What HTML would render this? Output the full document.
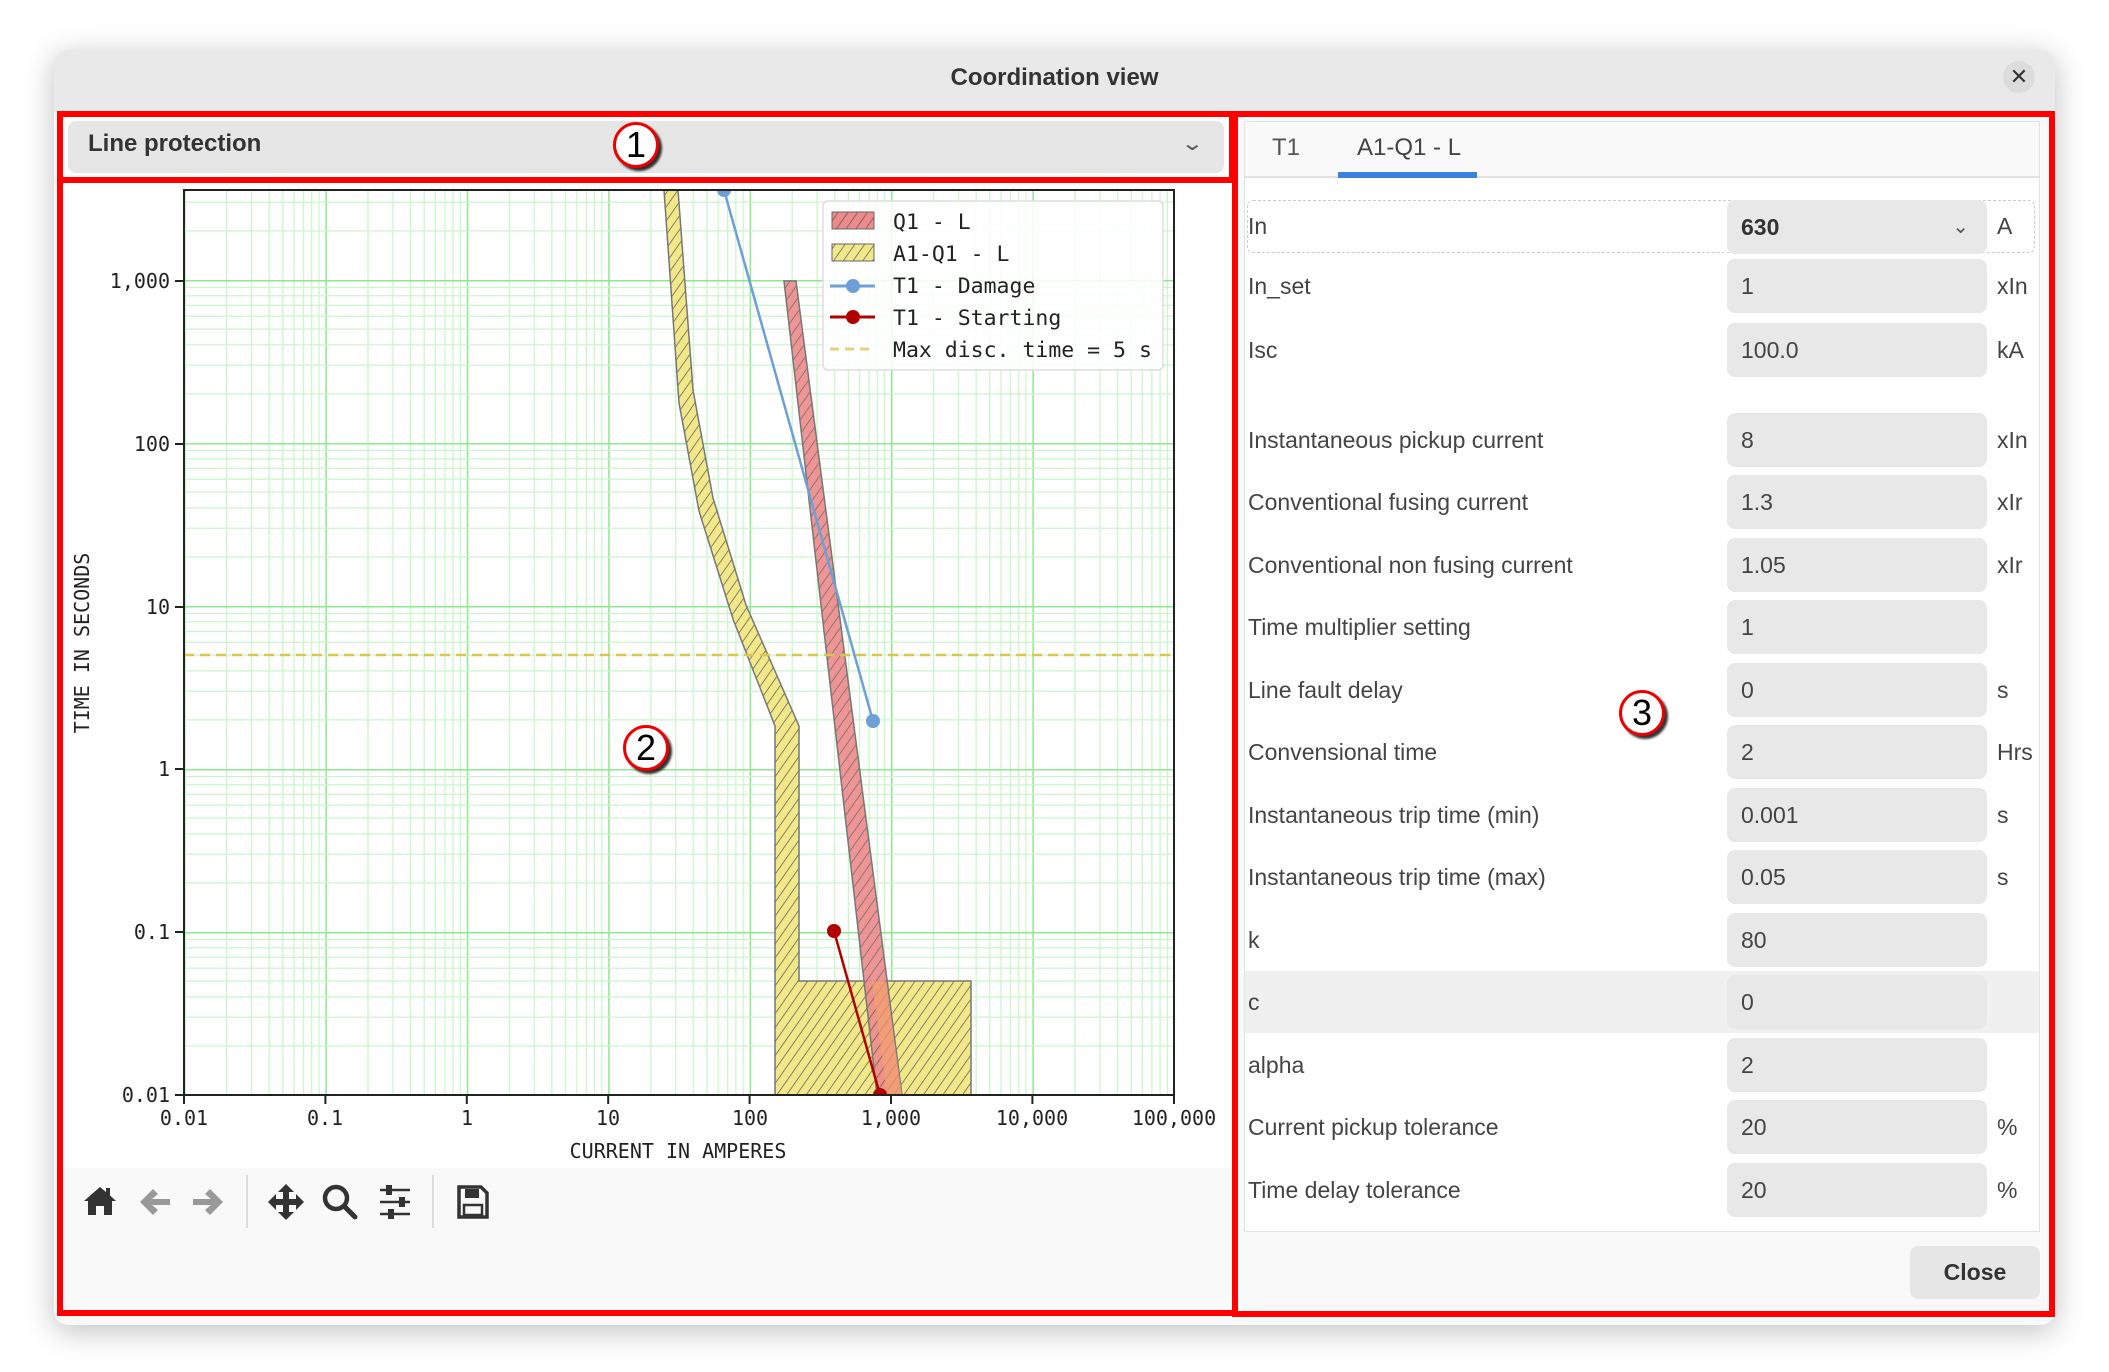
<!DOCTYPE html>
<html><head><meta charset="utf-8">
<style>
*{margin:0;padding:0;box-sizing:border-box}
body{width:2109px;height:1372px;background:#fff;position:relative;overflow:hidden;font-family:"Liberation Sans",sans-serif;color:#333}
.win{position:absolute;left:54px;top:50px;width:2001px;height:1275px;background:#f9f9f9;border-radius:14px;box-shadow:0 6px 30px rgba(0,0,0,.25)}
.title{position:absolute;left:54px;top:50px;width:2001px;height:62px;background:#e9e9e9;border-radius:14px 14px 0 0;text-align:center;line-height:56px;font-size:24px;font-weight:bold;color:#333}
.rb{position:absolute;border:6px solid #f00}
.lbl{position:absolute;left:1248px;font-size:23px;color:#444;line-height:30px}
.inp{position:absolute;left:1727px;width:260px;height:54px;background:#e8e8e8;border-radius:8px;font-size:23px;color:#444;padding-left:14px;line-height:54px}
.unit{position:absolute;left:1997px;font-size:23px;color:#444;line-height:30px}
.circ{position:absolute;width:46px;height:46px;border:3px solid #e00;border-radius:50%;background:#fff;box-shadow:3px 3px 2px rgba(0,0,0,.8);text-align:center;font-size:36px;line-height:40px;color:#000}
.tk{font-family:"DejaVu Sans Mono",monospace;font-size:20px;fill:#222}
</style></head><body>
<div class="win"></div>
<div class="title">Coordination view</div>
<div style="position:absolute;left:2003px;top:61px;width:32px;height:32px;border-radius:50%;background:#dcdcdc;text-align:center;line-height:32px;font-size:22px;color:#333">✕</div>

<div style="position:absolute;left:63px;top:117px;width:1165px;height:60px;background:#fff"></div>
<div style="position:absolute;left:68px;top:121px;width:1156px;height:52px;background:#e6e6e6;border-radius:8px"></div>
<div style="position:absolute;left:88px;top:130px;font-size:24px;font-weight:bold;color:#333">Line protection</div>
<div style="position:absolute;left:1184px;top:131px;font-size:20px;color:#555;transform:scaleX(1.4)">⌄</div>

<div style="position:absolute;left:63px;top:183px;width:1169px;height:985px;background:#fff"></div>
<div style="position:absolute;left:63px;top:1168px;width:1169px;height:143px;background:#f9f9f9"></div>

<svg style="position:absolute;left:0;top:0" width="2109" height="1372">
<defs>
<pattern id="gx" x="184" y="0" width="141.4" height="10" patternUnits="userSpaceOnUse">
<g stroke="#c8f5c8" stroke-width="1.2"><line x1="42.6" y1="0" x2="42.6" y2="10"/><line x1="67.5" y1="0" x2="67.5" y2="10"/><line x1="85.1" y1="0" x2="85.1" y2="10"/><line x1="98.8" y1="0" x2="98.8" y2="10"/><line x1="110" y1="0" x2="110" y2="10"/><line x1="119.5" y1="0" x2="119.5" y2="10"/><line x1="127.7" y1="0" x2="127.7" y2="10"/><line x1="135" y1="0" x2="135" y2="10"/></g>
<line x1="0.7" y1="0" x2="0.7" y2="10" stroke="#8ee88e" stroke-width="1.6"/>
</pattern>
<pattern id="gy" x="0" y="117" width="10" height="163" patternUnits="userSpaceOnUse">
<g stroke="#c8f5c8" stroke-width="1.2"><line y1="113.9" x1="0" y2="113.9" x2="10"/><line y1="85.2" x1="0" y2="85.2" x2="10"/><line y1="64.9" x1="0" y2="64.9" x2="10"/><line y1="49.1" x1="0" y2="49.1" x2="10"/><line y1="36.2" x1="0" y2="36.2" x2="10"/><line y1="25.3" x1="0" y2="25.3" x2="10"/><line y1="15.8" x1="0" y2="15.8" x2="10"/><line y1="7.5" x1="0" y2="7.5" x2="10"/></g>
<line x1="0" y1="0.7" x2="10" y2="0.7" stroke="#8ee88e" stroke-width="1.6"/>
</pattern>
<pattern id="hy" width="8" height="8" patternUnits="userSpaceOnUse" patternTransform="rotate(35)">
<rect width="8" height="8" fill="#f2e88a"/><line x1="0" y1="0" x2="0" y2="8" stroke="#555" stroke-width="1.4"/>
</pattern>
<pattern id="hr" width="8" height="8" patternUnits="userSpaceOnUse" patternTransform="rotate(35)">
<rect width="8" height="8" fill="#ee8a8a"/><line x1="0" y1="0" x2="0" y2="8" stroke="#555" stroke-width="1.4"/>
</pattern>
</defs>
<rect x="184" y="190" width="990" height="905" fill="url(#gx)"/>
<rect x="184" y="190" width="990" height="905" fill="url(#gy)"/>
<clipPath id="ax"><rect x="184" y="190" width="990" height="905"/></clipPath>
<g clip-path="url(#ax)">
<polygon points="664,190 679,403 699,511 733,619 775,726 775,1095 971,1095 971,981 799,981 799,726 746,605 713,498 693,390 678,190" fill="url(#hy)" stroke="#777" stroke-width="1.5"/>
<polygon points="784,281 796,281 902,1095 877,1095" fill="url(#hr)" fill-opacity=".9" stroke="#777" stroke-width="1.5"/>
<polygon points="872,981 886,981 902,1095 887,1095" fill="#f4a070" opacity=".7"/>
<line x1="724" y1="190" x2="873" y2="721" stroke="#6e9fd6" stroke-width="2.5"/>
<circle cx="724" cy="190" r="7" fill="#6e9fd6"/>
<circle cx="873" cy="721" r="7" fill="#6e9fd6"/>
<line x1="834" y1="931" x2="880" y2="1095" stroke="#b00000" stroke-width="2.5"/>
<circle cx="834" cy="931" r="7" fill="#b00000"/>
<circle cx="880" cy="1095" r="7" fill="#b00000"/>
<line x1="184" y1="655" x2="1174" y2="655" stroke="#d8c650" stroke-width="2.5" stroke-dasharray="10,6"/>
</g>
<rect x="184" y="190" width="990" height="905" fill="none" stroke="#222" stroke-width="2"/>
<g stroke="#222" stroke-width="2">
<line x1="184" y1="1095" x2="184" y2="1104"/><line x1="325.4" y1="1095" x2="325.4" y2="1104"/><line x1="466.8" y1="1095" x2="466.8" y2="1104"/><line x1="608.2" y1="1095" x2="608.2" y2="1104"/><line x1="749.6" y1="1095" x2="749.6" y2="1104"/><line x1="891" y1="1095" x2="891" y2="1104"/><line x1="1032.4" y1="1095" x2="1032.4" y2="1104"/><line x1="1174" y1="1095" x2="1174" y2="1104"/>
<line x1="175" y1="281" x2="184" y2="281"/><line x1="175" y1="444" x2="184" y2="444"/><line x1="175" y1="607" x2="184" y2="607"/><line x1="175" y1="769" x2="184" y2="769"/><line x1="175" y1="932" x2="184" y2="932"/><line x1="175" y1="1095" x2="184" y2="1095"/>
</g>
<g class="tk" text-anchor="middle">
<text x="184" y="1125">0.01</text><text x="325" y="1125">0.1</text><text x="467" y="1125">1</text><text x="608" y="1125">10</text><text x="750" y="1125">100</text><text x="891" y="1125">1,000</text><text x="1032" y="1125">10,000</text><text x="1174" y="1125">100,000</text>
</g>
<g class="tk" text-anchor="end">
<text x="170" y="288">1,000</text><text x="170" y="451">100</text><text x="170" y="614">10</text><text x="170" y="776">1</text><text x="170" y="939">0.1</text><text x="170" y="1102">0.01</text>
</g>
<text class="tk" x="678" y="1158" text-anchor="middle">CURRENT IN AMPERES</text>
<text class="tk" x="0" y="0" text-anchor="middle" transform="translate(89,643) rotate(-90)">TIME IN SECONDS</text>
<rect x="823" y="201" width="340" height="169" rx="5" fill="#fff" fill-opacity=".85" stroke="#ddd" stroke-width="1.5"/>
<rect x="832" y="212" width="42" height="17" fill="url(#hr)" stroke="#666"/>
<rect x="832" y="244" width="42" height="17" fill="url(#hy)" stroke="#666"/>
<line x1="830" y1="286" x2="875" y2="286" stroke="#6e9fd6" stroke-width="3"/><circle cx="853" cy="286" r="7" fill="#6e9fd6"/>
<line x1="830" y1="317" x2="875" y2="317" stroke="#b00000" stroke-width="3"/><circle cx="853" cy="317" r="7" fill="#b00000"/>
<line x1="830" y1="349" x2="875" y2="349" stroke="#e6d080" stroke-width="3" stroke-dasharray="9,6"/>
<g style="font-family:'DejaVu Sans Mono',monospace;font-size:21.5px;fill:#222">
<text x="893" y="229">Q1 - L</text><text x="893" y="261">A1-Q1 - L</text><text x="893" y="293">T1 - Damage</text><text x="893" y="325">T1 - Starting</text><text x="893" y="357">Max disc. time = 5 s</text>
</g>
<g fill="#333">
<path d="M100 1187 L84 1201 L88 1201 L88 1215 L96 1215 L96 1206 L104 1206 L104 1215 L112 1215 L112 1201 L116 1201 L110 1195.5 L110 1188 L106 1188 L106 1192 Z"/>
</g>
<g fill="#999">
<path d="M140 1202 L153 1189 L158 1194 L152 1199 L170 1199 L170 1205 L152 1205 L158 1210 L153 1215 Z"/>
<path d="M223 1202 L210 1189 L205 1194 L211 1199 L193 1199 L193 1205 L211 1205 L205 1210 L210 1215 Z"/>
</g>
<line x1="247" y1="1175" x2="247" y2="1228" stroke="#ddd" stroke-width="2"/>
<line x1="433" y1="1175" x2="433" y2="1228" stroke="#ddd" stroke-width="2"/>
<g fill="#333">
<path d="M286 1184 L294 1192 L289 1192 L289 1199 L296 1199 L296 1194 L304 1202 L296 1210 L296 1205 L289 1205 L289 1212 L294 1212 L286 1220 L278 1212 L283 1212 L283 1205 L276 1205 L276 1210 L268 1202 L276 1194 L276 1199 L283 1199 L283 1192 L278 1192 Z"/>
</g>
<circle cx="336" cy="1198" r="11" fill="none" stroke="#333" stroke-width="4.5"/>
<line x1="344" y1="1206" x2="355" y2="1217" stroke="#333" stroke-width="5" stroke-linecap="round"/>
<g stroke="#333" stroke-width="2.5"><line x1="380" y1="1190" x2="410" y2="1190"/><line x1="380" y1="1202" x2="410" y2="1202"/><line x1="380" y1="1214" x2="410" y2="1214"/></g>
<g fill="#333"><rect x="386" y="1185" width="6" height="10"/><rect x="399" y="1197" width="6" height="10"/><rect x="388" y="1209" width="6" height="10"/></g>
<path d="M459 1187 L481 1187 L487 1193 L487 1217 L459 1217 Z" fill="none" stroke="#333" stroke-width="3.5"/>
<rect x="465" y="1189" width="14" height="9" fill="#333"/>
<rect x="464" y="1205" width="18" height="10" fill="none" stroke="#333" stroke-width="2.5"/>
</svg>

<div style="position:absolute;left:1238px;top:117px;width:813px;height:1194px;background:#f9f9f9"></div>
<div style="position:absolute;left:1244px;top:121px;width:796px;height:57px;background:#f9f9f9;border:1px solid #e2e2e2;border-bottom:2px solid #e2e2e2"></div>
<div style="position:absolute;left:1272px;top:134px;font-size:24px;color:#555">T1</div>
<div style="position:absolute;left:1357px;top:134px;font-size:24px;color:#444">A1-Q1 - L</div>
<div style="position:absolute;left:1338px;top:172px;width:139px;height:6px;background:#3b82e0"></div>
<div style="position:absolute;left:1244px;top:178px;width:796px;height:1054px;background:#fff;border:1px solid #e2e2e2;border-top:none"></div>
<div style="position:absolute;left:1247px;top:200px;width:788px;height:53px;border:1.5px dashed #ccc;border-radius:6px"></div>
<div style="position:absolute;left:1245px;top:971px;width:794px;height:62px;background:#f0f0f0"></div>

<div class="lbl" style="top:211px">In</div>
<div class="inp" style="top:200px;font-weight:bold;color:#333">630<span style="position:absolute;right:18px;top:0;font-weight:normal;color:#555;font-size:20px">⌄</span></div>
<div class="unit" style="top:211px">A</div>

<div class="lbl" style="top:271px">In_set</div><div class="inp" style="top:259px">1</div><div class="unit" style="top:271px">xIn</div>
<div class="lbl" style="top:335px">Isc</div><div class="inp" style="top:323px">100.0</div><div class="unit" style="top:335px">kA</div>
<div class="lbl" style="top:425px">Instantaneous pickup current</div><div class="inp" style="top:413px">8</div><div class="unit" style="top:425px">xIn</div>
<div class="lbl" style="top:487px">Conventional fusing current</div><div class="inp" style="top:475px">1.3</div><div class="unit" style="top:487px">xIr</div>
<div class="lbl" style="top:550px">Conventional non fusing current</div><div class="inp" style="top:538px">1.05</div><div class="unit" style="top:550px">xIr</div>
<div class="lbl" style="top:612px">Time multiplier setting</div><div class="inp" style="top:600px">1</div>
<div class="lbl" style="top:675px">Line fault delay</div><div class="inp" style="top:663px">0</div><div class="unit" style="top:675px">s</div>
<div class="lbl" style="top:737px">Convensional time</div><div class="inp" style="top:725px">2</div><div class="unit" style="top:737px">Hrs</div>
<div class="lbl" style="top:800px">Instantaneous trip time (min)</div><div class="inp" style="top:788px">0.001</div><div class="unit" style="top:800px">s</div>
<div class="lbl" style="top:862px">Instantaneous trip time (max)</div><div class="inp" style="top:850px">0.05</div><div class="unit" style="top:862px">s</div>
<div class="lbl" style="top:925px">k</div><div class="inp" style="top:913px">80</div>
<div class="lbl" style="top:987px">c</div><div class="inp" style="top:975px">0</div>
<div class="lbl" style="top:1050px">alpha</div><div class="inp" style="top:1038px">2</div>
<div class="lbl" style="top:1112px">Current pickup tolerance</div><div class="inp" style="top:1100px">20</div><div class="unit" style="top:1112px">%</div>
<div class="lbl" style="top:1175px">Time delay tolerance</div><div class="inp" style="top:1163px">20</div><div class="unit" style="top:1175px">%</div>

<div style="position:absolute;left:1910px;top:1246px;width:130px;height:53px;background:#e6e6e6;border-radius:8px;text-align:center;line-height:53px;font-size:23px;font-weight:bold;color:#333">Close</div>

<div class="rb" style="left:57px;top:111px;width:1178px;height:72px"></div>
<div class="rb" style="left:57px;top:177px;width:1181px;height:1139px"></div>
<div class="rb" style="left:1232px;top:111px;width:823px;height:1206px"></div>

<div class="circ" style="left:613px;top:122px">1</div>
<div class="circ" style="left:623px;top:725px">2</div>
<div class="circ" style="left:1619px;top:690px">3</div>
</body></html>
